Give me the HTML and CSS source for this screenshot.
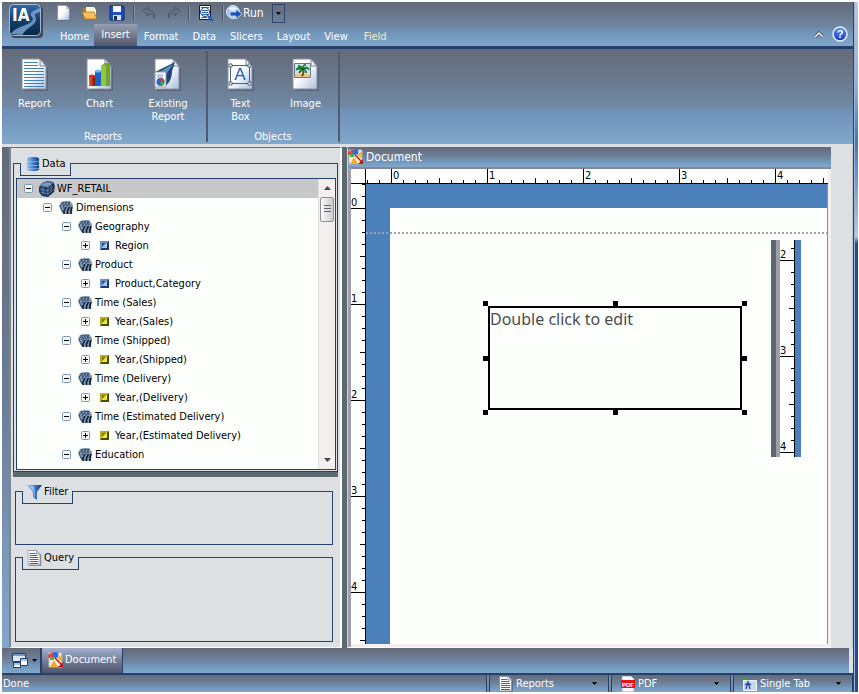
FILE: index.html
```html
<!DOCTYPE html>
<html lang="en">
<head>
  <meta charset="UTF-8">
  <meta name="viewport" content="width=device-width, initial-scale=1.0">
  <title>InfoAssist - Document</title>
  <link rel="stylesheet" href="styles.css">
</head>
<body>
  <!-- shared icons -->
  <svg class="defs" aria-hidden="true">
    <defs>
      <linearGradient id="g-paper" x1="0" y1="0" x2="1" y2="1">
        <stop offset=".45" stop-color="#fff"/><stop offset="1" stop-color="#a9bfe0"/>
      </linearGradient>
      <linearGradient id="g-logo" x1="0" y1="0" x2="0" y2="1">
        <stop offset="0" stop-color="#2f6cae"/><stop offset=".5" stop-color="#12406f"/><stop offset="1" stop-color="#0a2647"/>
      </linearGradient>
      <linearGradient id="g-blue" x1="0" y1="0" x2="1" y2="0">
        <stop offset="0" stop-color="#9cc4ee"/><stop offset=".5" stop-color="#3f7fce"/><stop offset="1" stop-color="#12357f"/>
      </linearGradient>
      <linearGradient id="g-orb" x1="0" y1="0" x2="0" y2="1">
        <stop offset="0" stop-color="#5d9af5"/><stop offset="1" stop-color="#0c35b5"/>
      </linearGradient>
      <linearGradient id="g-bar" x1="0" y1="0" x2="1" y2="0">
        <stop offset="0" stop-color="#f0662a"/><stop offset="1" stop-color="#7d0d05"/>
      </linearGradient>
    </defs>
    <symbol id="i-page" viewBox="0 0 28 33">
      <path d="M3 3h17l7 8v22H3z" fill="#4b5666" opacity=".6"/>
      <path d="M1 1h18l6 7v23H1z" fill="url(#g-paper)" stroke="#8a8f9b"/>
      <path d="M19 1v7h6z" fill="#e8edf5" stroke="#7f8794"/>
    </symbol>
    <symbol id="i-minus" viewBox="0 0 9 9">
      <rect x=".5" y=".5" width="8" height="8" rx="1" fill="#f6f6f2" stroke="#7c9ab8"/><path d="M2 4.500h5" stroke="#000"/>
    </symbol>
    <symbol id="i-plus" viewBox="0 0 9 9">
      <rect x=".5" y=".5" width="8" height="8" rx="1" fill="#f6f6f2" stroke="#7c9ab8"/><path d="M2 4.500h5M4.500 2v5" stroke="#000"/>
    </symbol>
    <symbol id="i-cube" viewBox="0 0 16 16">
      <path d="M0 6l3-4 5-2 6 1 2 4-1 6-6 5-6-1-3-4z" fill="#1f3a63"/>
      <path d="M1 5l3-3 4-1 6 1-5 4z" fill="#6d92ba"/>
      <path d="M10 7l5-5v8l-6 5z" fill="#13233f"/>
      <path d="M3 3l6 2v9M6 1.500l6 2v8M1 8l8 2 6-5M2 11l7 2 6-5M4 6v7" stroke="#8eabca" stroke-width=".6" fill="none"/>
    </symbol>
    <symbol id="i-dim" viewBox="0 0 14 14">
      <path d="M0 5l2-4 4-1h5l3 4-1 9H5L2 10z" fill="#8198b2"/>
      <path d="M3 1l2 4M6 1l2 4M9 1l2 4M1 5l4-4M4 6l4-5M8 6l3-5" stroke="#2e4663" stroke-width=".9"/>
      <path d="M5 13v-3l2-4M8.500 13v-3l2-4M12 13V9l1-3" stroke="#0c1930" stroke-width="1.600" fill="none"/>
      <path d="M1 5l3 7M4 5l2 4" stroke="#3d5876"/>
    </symbol>
    <symbol id="i-blue" viewBox="0 0 9 9">
      <path d="M0 0h9v9H0z" fill="#1f3a6b"/><path d="M0 0h9L0 9z" fill="#6c92c8"/><path d="M2 2h5v5H2z" fill="#a9c1e4"/><path d="M2 2h4L2 6z" fill="#2d4f8c"/>
    </symbol>
    <symbol id="i-gold" viewBox="0 0 9 9">
      <path d="M0 0h9v9H0z" fill="#4c4a05"/><path d="M0 0h9L0 9z" fill="#b3ae1a"/><path d="M2 2h5v5H2z" fill="#ece635"/><path d="M2 2h4L2 6z" fill="#7a760c"/>
    </symbol>
    <symbol id="i-lines" viewBox="0 0 14 16">
      <path d="M2 2h9l3 3v11H2z" fill="#55606f" opacity=".7"/>
      <path d="M.5.500h8.500l3.500 3.500v11H.5z" fill="#fff" stroke="#8b97a8"/>
      <path d="M2 3.500h6M2 5.500h8M2 7.500h9M2 9.500h9M2 11.500h9M2 13.500h9" stroke="#2f6cb8"/>
      <path d="M9 .5V4h3.500" fill="#dfe7f1" stroke="#8b97a8"/>
    </symbol>
    <symbol id="i-doc" viewBox="0 0 16 16">
      <path d="M1 1h13v14H1z" fill="#fdf4dc" stroke="#b8b8b8"/>
      <path d="M2 15l4-7 4 7z" fill="#f0a92c"/><path d="M9 6l5-4v8z" fill="#f2b13a"/>
      <path d="M0 3l5-3v6H0z" fill="#e8483b"/><circle cx="7.500" cy="3" r="3" fill="#2c6be0"/>
      <path d="M2 5h4v3H2z" fill="#49b04a"/>
      <path d="M7 6l7 7" stroke="#c01616" stroke-width="1.500"/><path d="M15 10v5h-5z" fill="#c01616"/>
    </symbol>
    <symbol id="i-caret" viewBox="0 0 5 3"><path d="M0 0h5L2.500 3z" fill="#000"/></symbol>
  </svg>

  <div class="app">
    <header class="topbar">
      <svg class="logo" viewBox="0 0 34 34" role="img" aria-label="IA">
        <rect x="2" y="2" width="32" height="32" rx="4" fill="#3d4959"/>
        <rect x=".5" y=".5" width="31" height="31" rx="4" fill="url(#g-logo)" stroke="#a6b8cc"/>
        <path d="M2 30c5-8 17-8 21-13 3-4-3-5-1-8 2-2 5-4 9-5v4c-4 1-6 2-5 4 2 4 1 7-5 11-4 3-6 5-8 8z" fill="#7da3cc" opacity=".85"/>
        <text x="3" y="17" class="logo-text">IA</text>
      </svg>
      <div class="top-rows">
        <div class="quick">
          <button aria-label="New"><svg width="14" height="16" viewBox="0 0 28 33"><use href="#i-page"/></svg></button>
          <button aria-label="Open"><svg width="16" height="16" viewBox="0 0 16 16"><path d="M1 3h6l1 2h6v10H2z" fill="#c97a1b"/><path d="M4 2h8l2 3v5H4z" fill="#fff5dd"/><path d="M0 7h12l3 7H3z" fill="#f9c25b" stroke="#a85d10" stroke-width=".7"/></svg></button>
          <button aria-label="Save"><svg width="16" height="16" viewBox="0 0 16 16"><path d="M1 1h13l1 1v13H1z" fill="#1c4fc4" stroke="#0c2673"/><path d="M4 1h8v6H4z" fill="#f4f7ff"/><path d="M4 10h8v5H4z" fill="#d9e2f3"/><path d="M5 11h3v4H5z" fill="#1a2e62"/></svg></button>
          <span class="sep"></span>
          <button aria-label="Undo"><svg width="13" height="12" viewBox="0 0 13 12"><path d="M0 4l5-4v3c5 0 8 3 6 8 0-3-2-5-6-4v2z" fill="#657285" stroke="#454f60" stroke-width=".8"/></svg></button>
          <button aria-label="Redo"><svg width="13" height="12" viewBox="0 0 13 12"><path d="M13 4L8 0v3C3 3 0 6 2 11c0-3 2-5 6-4v2z" fill="#657285" stroke="#454f60" stroke-width=".8"/></svg></button>
          <span class="sep"></span>
          <button aria-label="Preview"><svg width="16" height="17" viewBox="0 0 16 17"><path d="M1.500.500h11v14h-11z" fill="#fff" stroke="#1a1f2c"/><path d="M3 2.500h8M3 12.500h6" stroke="#2f6cb8"/><circle cx="7" cy="7" r="4.500" fill="#e4f0fc" stroke="#1c4486"/><path d="M4 5.500h6M4 7.500h6M4 9.500h6" stroke="#2f6cb8"/><path d="M10 11l5 5" stroke="#1f5fc4" stroke-width="2.500"/></svg></button>
          <span class="sep"></span>
          <button class="run"><svg width="16" height="16" viewBox="0 0 16 16"><circle cx="7" cy="7" r="6.500" fill="#9dc2ee" stroke="#dce8f6"/><path d="M2 4c4-4 9-2 10 1L6 6z" fill="#eaf3fd"/><path d="M4 7h6V4l6 5-6 5v-3H4z" fill="#1a4fb8" stroke="#e4eefb" stroke-width=".8"/></svg>Run</button>
          <button class="run-more" aria-label="Run options"><svg width="5" height="3"><use href="#i-caret"/></svg></button>
        </div>
        <nav class="tabs">
          <a href="#">Home</a>
          <a href="#" class="active">Insert</a>
          <a href="#">Format</a>
          <a href="#">Data</a>
          <a href="#">Slicers</a>
          <a href="#">Layout</a>
          <a href="#">View</a>
          <a href="#" class="field">Field</a>
        </nav>
      </div>
      <div class="help">
        <button aria-label="Collapse ribbon"><svg width="10" height="7" viewBox="0 0 10 7"><path d="M1 6l4-4 4 4" fill="none" stroke="#39424f" stroke-width="3"/><path d="M1 6l4-4 4 4" fill="none" stroke="#fff" stroke-width="1.500"/></svg></button>
        <button aria-label="Help"><svg width="16" height="16" viewBox="0 0 16 16"><circle cx="8" cy="8" r="7" fill="url(#g-orb)" stroke="#e6ecf6" stroke-width="1.500"/><text x="8" y="12" class="help-mark">?</text></svg></button>
      </div>
    </header>

    <div class="ribbon">
      <section class="group reports">
        <div class="tools">
          <button><svg width="28" height="33" viewBox="0 0 28 33"><use href="#i-page"/><path d="M3 4.500h14M3 7.500h14M3 10.500h20M3 13.500h20M3 16.500h20M3 19.500h20M3 22.500h20M3 25.500h20M3 28.500h20" stroke="#3f82c0"/></svg>Report</button>
          <button><svg width="28" height="33" viewBox="0 0 28 33"><use href="#i-page"/><path d="M3 18h6v10H3z" fill="url(#g-bar)"/><ellipse cx="6" cy="18" rx="3" ry="1.500" fill="#e02a1c"/><path d="M9 13h6v15H9z" fill="#1a62c8"/><ellipse cx="12" cy="13" rx="3" ry="1.500" fill="#63c4f4"/><path d="M15 8c3-3 5-4 9-3v23h-9z" fill="#6fa52a"/><path d="M15 8c2-1 4-1 5 0v20h-5z" fill="#96c63f"/></svg>Chart</button>
          <button class="wide"><svg width="28" height="33" viewBox="0 0 28 33"><use href="#i-page"/><path d="M21 4L1 14l8 2 1 13c6-4 8-10 8-16z" fill="#1d4676"/><path d="M19 6L5 14l8 1z" fill="#5d93c6"/><path d="M1 14h11v15H1z" fill="#fff" stroke="#8c97a8"/><path d="M3 17h6M3 19h6" stroke="#6f93bd"/><circle cx="6.500" cy="24" r="4" fill="#2c62ce"/><path d="M6.500 24v-4a4 4 0 0 1 4 4z" fill="#e13a2f"/><path d="M6.500 24h4a4 4 0 0 1-4 4z" fill="#3da655"/></svg>Existing<br>Report</button>
        </div>
        <h2>Reports</h2>
      </section>
      <section class="group">
        <div class="tools">
          <button><svg width="28" height="33" viewBox="0 0 28 33"><use href="#i-page"/><path d="M3.500 7.500h19v18h-19z" fill="none" stroke="#47618c"/><path d="M2 6h3v3H2zM21 6h3v3h-3zM2 24h3v3H2zM21 24h3v3h-3z" fill="#fff" stroke="#59657a"/><text x="13" y="22" class="box-letter">A</text></svg>Text<br>Box</button>
          <button><svg width="28" height="33" viewBox="0 0 28 33"><use href="#i-page"/><path d="M2.500 5.500h16v14h-16z" fill="#c8e7f3" stroke="#6c7787"/><path d="M3 16h15v3H3z" fill="#e9c58c"/><path d="M11 10c1 3 1 5-1 8" stroke="#8c3d15" stroke-width="2" fill="none"/><path d="M11 11C8 8 5 9 4 12c2-1 4-1 7-1-3 1-4 2-4 4 2-1 3-2 4-4 2 1 3 2 3 4 1-2 0-3-3-4 2-1 5-1 6 1 0-3-3-4-6-1 0-2 1-4 3-4-2-1-4 1-3 4-1-2-3-4-5-3 2 0 4 1 5 3z" fill="#138a2a" stroke="#0b6a1e"/></svg>Image</button>
        </div>
        <h2>Objects</h2>
      </section>
    </div>

    <main class="workspace">
      <aside class="resources">
        <section class="box data-box">
          <h2 class="box-tab"><svg width="15" height="16" viewBox="0 0 16 16"><path d="M2 2c2-2 11-2 13 0v12c-2 2-11 2-13 0z" fill="url(#g-blue)"/><path d="M2 5c3 1 10 1 13 0M2 9c3 1 10 1 13 0M2 12.500c3 1 10 1 13 0" stroke="#b7d2ef" stroke-width=".7" fill="none"/></svg>Data</h2>
          <div class="tree-wrap">
            <ul class="tree">
              <li class="root"><svg width="9" height="9"><use href="#i-minus"/></svg><svg width="16" height="16"><use href="#i-cube"/></svg>WF_RETAIL</li>
              <li class="l1"><svg width="9" height="9"><use href="#i-minus"/></svg><svg width="14" height="14"><use href="#i-dim"/></svg>Dimensions</li>
              <li class="l2"><svg width="9" height="9"><use href="#i-minus"/></svg><svg width="14" height="14"><use href="#i-dim"/></svg>Geography</li>
              <li class="l3"><svg width="9" height="9"><use href="#i-plus"/></svg><svg width="9" height="9"><use href="#i-blue"/></svg>Region</li>
              <li class="l2"><svg width="9" height="9"><use href="#i-minus"/></svg><svg width="14" height="14"><use href="#i-dim"/></svg>Product</li>
              <li class="l3"><svg width="9" height="9"><use href="#i-plus"/></svg><svg width="9" height="9"><use href="#i-blue"/></svg>Product,Category</li>
              <li class="l2"><svg width="9" height="9"><use href="#i-minus"/></svg><svg width="14" height="14"><use href="#i-dim"/></svg>Time (Sales)</li>
              <li class="l3"><svg width="9" height="9"><use href="#i-plus"/></svg><svg width="9" height="9"><use href="#i-gold"/></svg>Year,(Sales)</li>
              <li class="l2"><svg width="9" height="9"><use href="#i-minus"/></svg><svg width="14" height="14"><use href="#i-dim"/></svg>Time (Shipped)</li>
              <li class="l3"><svg width="9" height="9"><use href="#i-plus"/></svg><svg width="9" height="9"><use href="#i-gold"/></svg>Year,(Shipped)</li>
              <li class="l2"><svg width="9" height="9"><use href="#i-minus"/></svg><svg width="14" height="14"><use href="#i-dim"/></svg>Time (Delivery)</li>
              <li class="l3"><svg width="9" height="9"><use href="#i-plus"/></svg><svg width="9" height="9"><use href="#i-gold"/></svg>Year,(Delivery)</li>
              <li class="l2"><svg width="9" height="9"><use href="#i-minus"/></svg><svg width="14" height="14"><use href="#i-dim"/></svg>Time (Estimated Delivery)</li>
              <li class="l3"><svg width="9" height="9"><use href="#i-plus"/></svg><svg width="9" height="9"><use href="#i-gold"/></svg>Year,(Estimated Delivery)</li>
              <li class="l2"><svg width="9" height="9"><use href="#i-minus"/></svg><svg width="14" height="14"><use href="#i-dim"/></svg>Education</li>
            </ul>
            <div class="scrollbar">
              <svg width="7" height="4" viewBox="0 0 7 4"><path d="M0 4h7L3.500 0z" fill="#444"/></svg>
              <div class="thumb"></div>
              <svg width="7" height="4" viewBox="0 0 7 4"><path d="M0 0h7L3.500 4z" fill="#444"/></svg>
            </div>
          </div>
        </section>
        <div class="splitter"></div>
        <section class="box filter-box">
          <h2 class="box-tab"><svg width="15" height="16" viewBox="0 0 15 16"><path d="M0 1h15l-5 7v8l-4-3V8z" fill="url(#g-blue)"/><path d="M2 2h5l1 10-1 1V8z" fill="#c3dbf5" opacity=".6"/></svg>Filter</h2>
        </section>
        <section class="box query-box">
          <h2 class="box-tab"><svg width="15" height="16" viewBox="0 0 14 16"><use href="#i-lines"/></svg>Query</h2>
        </section>
      </aside>

      <div class="divider"></div>

      <section class="document">
        <h2 class="doc-title"><svg width="16" height="16"><use href="#i-doc"/></svg>Document</h2>
        <div class="doc-body">
          <div class="corner"></div>
          <div class="ruler-x"><span>0</span><span>1</span><span>2</span><span>3</span><span>4</span></div>
          <div class="ruler-y"><span>0</span><span>1</span><span>2</span><span>3</span><span>4</span></div>
          <div class="canvas">
            <div class="page">
              <div class="margin-line"></div>
            </div>
            <div class="ruler-copy">
              <div class="ruler-y"><span>2</span><span>3</span><span>4</span></div>
            </div>
            <div class="text-object">
              Double click to edit
              <i class="handle nw"></i><i class="handle n"></i><i class="handle ne"></i>
              <i class="handle w"></i><i class="handle e"></i>
              <i class="handle sw"></i><i class="handle s"></i><i class="handle se"></i>
            </div>
          </div>
        </div>
      </section>
      <div class="gutter"></div>
    </main>

    <div class="taskbar">
      <button class="windows" aria-label="Windows"><svg width="16" height="15" viewBox="0 0 16 15"><path d="M.5.500h13v8H.5z" fill="#dfe9f5" stroke="#23406c"/><path d="M1 2h12" stroke="#7398c2" stroke-width="2"/><path d="M1.500 9.500h7v5h-7zM8.500 5.500h7v7h-7z" fill="#fff" stroke="#23406c"/><path d="M2 11h6M9 7h6" stroke="#5580b4"/></svg><svg width="5" height="3"><use href="#i-caret"/></svg></button>
      <button class="task active"><svg width="16" height="16"><use href="#i-doc"/></svg>Document</button>
    </div>

    <footer class="status">
      <span class="state">Done</span>
      <label class="choice"><svg width="14" height="16"><use href="#i-lines"/></svg><select aria-label="Output target"><option>Reports</option></select><svg width="5" height="3"><use href="#i-caret"/></svg></label>
      <label class="choice"><svg width="14" height="16" viewBox="0 0 14 16"><path d="M1 0h9l3 3v13H1z" fill="#f5f7fa" stroke="#a0a8b5"/><path d="M0 4h14v8H0z" fill="#e3170d"/><text x="7" y="11" class="pdf-mark">PDF</text></svg><select aria-label="Output format"><option>PDF</option></select><svg width="5" height="3"><use href="#i-caret"/></svg></label>
      <label class="choice"><svg width="14" height="16" viewBox="0 0 14 16"><path d="M0 1h5v3H0z" fill="#1fae3a"/><path d="M.5 4.500h13v10H.5z" fill="#c7d7ee" stroke="#eef3fa"/><path d="M3 13l2-7 2 7M2 9l3-2 3 2" stroke="#1c3f9c" stroke-width="1.200" fill="none"/></svg><select aria-label="Tab mode"><option>Single Tab</option></select><svg width="5" height="3"><use href="#i-caret"/></svg></label>
    </footer>
  </div>
  <div class="desktop-edge"></div>
</body>
</html>
```

FILE: styles.css
```css
* { box-sizing: border-box; }
:root {
  --bar: linear-gradient(#646b79, #69788d 30%, #7189a4 60%, #6f93b8 66%, #81a7cb);
  --navy: #25406b;
  --panel: #dce0e3;
  --paper: #fdfffd;
}
body {
  margin: 0;
  padding: 2px 0 2px 2px;
  height: 100vh;
  display: flex;
  overflow: hidden;
  background: #fff;
  font: 11px/13px "DejaVu Sans Condensed", "Noto Sans", sans-serif;
  color: #000;
}
h2, ul { margin: 0; padding: 0; font-size: 11px; font-weight: normal; }
svg { display: block; flex: none; }
.defs { position: absolute; width: 0; height: 0; }
button {
  border: 0;
  padding: 0;
  background: none;
  font: inherit;
  color: #fff;
}
.app {
  flex: 1;
  min-width: 0;
  display: flex;
  flex-direction: column;
  background: var(--panel);
  border-right: 1px solid var(--navy);
}
.desktop-edge {
  width: 5px;
  border-left: 1px solid #9fb6d6;
  border-right: 1px solid #fff;
  background: linear-gradient(#b9c9e6, #90b0dc 12%, #3f78bf 20%, #b7cbe6 34%, #24489a 35%, #24489a);
}

/* top bar */
.topbar {
  height: 47px;
  display: flex;
  background: var(--bar);
  border-bottom: 3px solid var(--navy);
}
.logo { width: 34px; height: 34px; margin: 2px 0 0 7px; }
.logo-text { font: bold 17px "DejaVu Sans Condensed", sans-serif; fill: #fff; }
.top-rows { flex: 1; padding-left: 10px; }
.quick { height: 22px; padding-left: 4px; display: flex; align-items: center; gap: 11px; }
.quick .sep { width: 2px; height: 15px; border-left: 1px solid #4b5463; border-right: 1px solid #8a94a5; margin: 0 -3px; }
.run { display: flex; align-items: center; gap: 1px; font-size: 12px; margin-left: -6px; }
.run-more { width: 13px; height: 19px; border: 1px solid #2f4468; display: grid; place-items: center; margin-left: -3px; }
.tabs { display: flex; height: 22px; line-height: 26px; }
.tabs a { color: #fff; text-decoration: none; padding: 0 7px; }
.tabs a:first-child { padding-right: 5px; }
.tabs a.active { background: linear-gradient(#989fb2, #52576a); line-height: 22px; }
.tabs a.field { color: #f1e9c4; padding-left: 9px; }
.help { display: flex; align-items: center; gap: 8px; padding: 20px 5px 0 0; }
.help-mark { font: bold 11px "Liberation Sans", sans-serif; fill: #fff; text-anchor: middle; }

/* ribbon */
.ribbon { height: 95px; display: flex; background: var(--bar); }
.group {
  margin: 2px 0;
  padding-top: 7px;
  display: flex;
  flex-direction: column;
  border-right: 2px solid #525b6c;
  color: #fff;
  text-align: center;
}
.group.reports { padding-right: 2px; }
.tools { flex: 1; display: flex; align-items: flex-start; }
.tools button { width: 65px; }
.tools button.wide { width: 72px; }
.tools svg { margin: 0 auto 6px; }
.group h2 { line-height: 11px; }
.box-letter { font: 17px "Liberation Sans", sans-serif; fill: #1f5cc0; text-anchor: middle; }

/* workspace */
.workspace {
  flex: 1;
  min-height: 0;
  display: flex;
  margin-top: 3px;
  padding-left: 7px;
  background: linear-gradient(#626c79, #6b7c92 50%, #7896b8 78%, #81a7cb);
}
.resources {
  width: 333px;
  padding: 15px 3px 5px;
  display: flex;
  flex-direction: column;
  background: var(--panel);
  border: solid;
  border-width: 1px 2px;
  border-color: #6a6f7b #fff #fff #7f8490;
}
.box { border: 1px solid var(--navy); }
.box-tab {
  display: flex;
  align-items: flex-end;
  gap: 2px;
  width: max-content;
  height: 13px;
  margin: -1px 0 0 6px;
  padding: 0 4px 3px;
  line-height: 16px;
  background: var(--panel);
  border: 1px solid var(--navy);
  border-top: 0;
}
.data-box { flex: 1; min-height: 0; margin: 0 -1px; padding: 0 1px 1px 2px; display: flex; flex-direction: column; }
.data-box .box-tab { margin-left: 4px; }
.tree-wrap { flex: 1; min-height: 0; margin-top: 2px; display: flex; background: var(--paper); border: 1px solid var(--navy); }
.tree { flex: 1; list-style: none; overflow: hidden; }
.tree li { display: flex; align-items: center; height: 19px; gap: 3px; }
.tree li svg:first-child { margin-right: 4px; }
.tree .root { padding-left: 7px; gap: 2px; background: #c8c8ca; }
.tree .l1 { padding-left: 26px; }
.tree .l2 { padding-left: 45px; }
.tree .l3 { padding-left: 64px; gap: 6px; }
.scrollbar {
  width: 17px;
  padding: 7px 1px;
  display: flex;
  flex-direction: column;
  align-items: center;
  background: #f4eeee;
  border-left: 1px solid var(--panel);
}
.thumb {
  width: 14px;
  height: 25px;
  margin: 7px 0 auto;
  border: 1px solid #8f9296;
  border-radius: 2px;
  background: repeating-linear-gradient(#666 0 1px, transparent 1px 3px) center / 7px 9px no-repeat, linear-gradient(90deg, #fafafa, #c9cbce);
}
.splitter { height: 5px; margin: 0 -1px; background: #5c6970; }
.filter-box { height: 54px; margin: 14px 4px 0 1px; }
.query-box { height: 85px; margin: 12px 4px 0 1px; }
.divider { width: 5px; background: #5c6970; }

/* document */
.document { flex: 1; min-width: 0; display: flex; flex-direction: column; border-left: 1px solid #d0d2d6; background: #fff; }
.doc-title { height: 20px; display: flex; align-items: center; gap: 2px; color: #fff; font-size: 12px; background: var(--bar); }
.doc-body {
  flex: 1;
  min-height: 0;
  display: grid;
  grid-template-columns: 15px 1fr;
  grid-template-rows: 15px 1fr;
  padding: 0 3px 3px 0;
  margin-bottom: 1px;
  background: #f4eeee;
  border-left: 3px solid #a09ea8;
  border-top: 2px solid #86859a;
}
.corner { background: var(--paper); border: solid #000; border-width: 0 1px 1px 0; }
.ruler-x, .ruler-y { font: 11px/10px "DejaVu Sans Condensed", sans-serif; overflow: hidden; display: flex; }
.ruler-x {
  padding-left: 25px;
  line-height: 13px;
  border-bottom: 1px solid #000;
  background:
    linear-gradient(90deg, #000 1px, transparent 1px) 25px 0 / 96px 14px repeat-x,
    linear-gradient(90deg, #000 1px, transparent 1px) 73px 100% / 96px 5px repeat-x,
    linear-gradient(90deg, #000 1px, transparent 1px) 1px 100% / 12px 3px repeat-x,
    var(--paper);
}
.ruler-x span { flex: 0 0 96px; padding-left: 2px; }
.ruler-y {
  flex-direction: column;
  border-right: 1px solid #000;
  background:
    linear-gradient(#000 1px, transparent 1px) 0 24px / 14px 96px repeat-y,
    linear-gradient(#000 1px, transparent 1px) 100% 72px / 5px 96px repeat-y,
    linear-gradient(#000 1px, transparent 1px) 100% 0 / 3px 12px repeat-y,
    var(--paper);
}
.ruler-y span { flex: 0 0 96px; display: flex; align-items: flex-end; }
.ruler-y span:first-child { flex-basis: 24px; }
.canvas { position: relative; overflow: hidden; background: #4b80ba; padding: 24px 0 0 24px; border-right: 1px solid #8f8f93; }
.page { height: 100%; background: var(--paper); }
.margin-line {
  height: 26px;
  margin-left: -24px;
  background: repeating-linear-gradient(90deg, #a5a3a5 0 2px, transparent 2px 4px) 0 100% / 100% 2px no-repeat;
}
.ruler-copy {
  position: absolute;
  left: 405px;
  top: 56px;
  width: 30px;
  height: 217px;
  display: flex;
  background: #4b80ba;
  border-left: 5px solid #5c6970;
}
.ruler-copy .ruler-y { width: 19px; border-left: 4px solid #a09ea8; background-position: 0 20px, 100% 68px, 100% 8px, 0 0; }
.ruler-copy .ruler-y span:first-child { flex-basis: 20px; }
.text-object {
  position: absolute;
  left: 122px;
  top: 122px;
  width: 254px;
  height: 104px;
  border: 2px solid #000;
  font: 16px/22px "Noto Sans", sans-serif;
  color: #4b4b50;
}
.handle { position: absolute; width: 5px; height: 5px; background: #000; }
.nw, .n, .ne { top: -7px; }
.w, .e { top: 48px; }
.sw, .s, .se { bottom: -7px; }
.nw, .w, .sw { left: -7px; }
.n, .s { left: 123px; }
.ne, .e, .se { right: -7px; }
.gutter { width: 22px; background: var(--panel); border-right: 1px solid #c4c7ca; box-shadow: inset -3px 0 var(--panel); }

/* bottom bars */
.taskbar { height: 25px; display: flex; margin-right: 4px; background: var(--bar); }
.windows { width: 40px; display: flex; align-items: center; justify-content: center; gap: 4px; padding-left: 6px; border-right: 2px solid var(--navy); }
.task { display: flex; align-items: center; gap: 1px; padding: 0 6px 2px; border-right: 1px solid var(--navy); }
.task.active { background: linear-gradient(#a3afcf, #6c7590 60%, #4f566b); }
.status {
  height: 19px;
  display: grid;
  grid-template-columns: 1fr 120px 120px 120px;
  gap: 2px;
  color: #fff;
  background: #7b8ba0;
  border-top: 2px solid var(--navy);
}
.status > * { background: var(--bar); border-right: 1px solid var(--navy); }
.state { padding-left: 1px; line-height: 17px; }
.choice { display: flex; align-items: center; gap: 3px; padding: 0 11px 0 9px; border-left: 1px solid var(--navy); overflow: hidden; }
.choice select { flex: 1; min-width: 0; appearance: none; border: 0; padding: 0; background: none; color: #fff; font: inherit; }
.pdf-mark { font: bold 6px "Liberation Sans", sans-serif; fill: #fff; text-anchor: middle; }
```
